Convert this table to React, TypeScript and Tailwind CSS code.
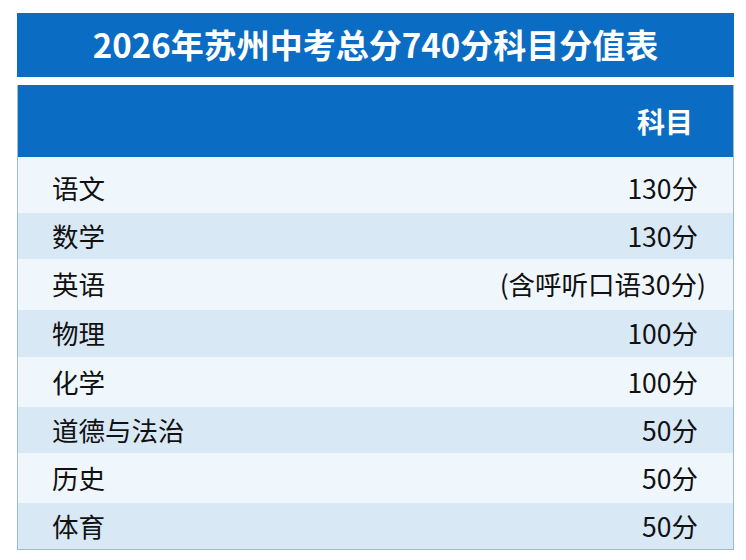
import React from "react";

const rows: { name: string; score: string; h: string; bg: string; extra?: string }[] = [
  { name: "语文", score: "130分", h: "h-[56px] pt-[6px]", bg: "bg-[#f0f7fc]" },
  { name: "数学", score: "130分", h: "h-[46px]", bg: "bg-[#d9e8f5]" },
  { name: "英语", score: "(含呼听口语30分)", h: "h-[51px]", bg: "bg-[#f0f7fc]", extra: "mr-[-8px]" },
  { name: "物理", score: "100分", h: "h-[47px]", bg: "bg-[#d9e8f5]" },
  { name: "化学", score: "100分", h: "h-[50px]", bg: "bg-[#f0f7fc]" },
  { name: "道德与法治", score: "50分", h: "h-[46px]", bg: "bg-[#d9e8f5]" },
  { name: "历史", score: "50分", h: "h-[50px]", bg: "bg-[#f0f7fc]" },
  { name: "体育", score: "50分", h: "h-[46px]", bg: "bg-[#d9e8f5]" },
];

export default function App() {
  return (
    <div
      className="w-[746px] h-[560px] bg-white pt-[13px] pl-[17px]"
      style={{ fontFamily: '"Noto Sans CJK SC", "Noto Sans", sans-serif' }}
    >
      <div className="w-[717px] flex flex-col">
        <div className="h-[64px] bg-[#0b6cc3] flex items-center justify-center text-white font-bold text-[33px] leading-none pb-[2px]">
          2026年苏州中考总分740分科目分值表
        </div>
        <div className="mt-[8px] border-x border-b border-[#9dbbd6]">
          <div className="h-[72px] bg-[#0b6cc3] flex items-center justify-end pr-[40px] text-white font-bold text-[28px] leading-none">
            科目
          </div>
          {rows.map((r) => (
            <div
              key={r.name}
              className={`${r.h} ${r.bg} flex items-center justify-between pl-[34px] pr-[35px] text-[26.5px] leading-none text-[#111]`}
            >
              <span>{r.name}</span>
              <span className={r.extra}>{r.score}</span>
            </div>
          ))}
        </div>
      </div>
    </div>
  );
}
